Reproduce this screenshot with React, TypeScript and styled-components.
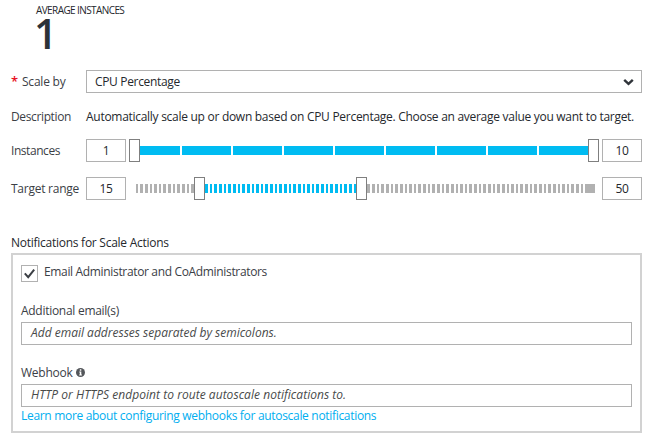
import React from 'react';
import styled, { createGlobalStyle } from 'styled-components';

const GlobalStyle = createGlobalStyle`
  * { box-sizing: border-box; }
  body {
    margin: 0;
    background: #fff;
    color: #25282d;
    font: 12px/17px "Open Sans", "Noto Sans", sans-serif;
  }
`;

const Page = styled.main`
  width: 663px;
  height: 443px;
  padding: 4px 21px 0 11px;
  display: flex;
  flex-direction: column;
  overflow: hidden;
`;

const Summary = styled.header`
  height: 66px;
  padding-left: 25px;
`;

const SummaryTitle = styled.div`
  font-size: 10px;
  font-weight: 500;
  line-height: 13px;
  letter-spacing: -0.59px;
  white-space: nowrap;
`;

const SummaryValue = styled.div`
  margin-left: -2px;
  color: #2c3238;
  font-size: 41px;
  font-weight: 600;
  line-height: 33px;
`;

const Text = styled.span<{ $spacing: number }>`
  letter-spacing: ${(p) => p.$spacing}px;
  white-space: nowrap;
`;

const Row = styled.div<{ $gap: number; $height?: number }>`
  display: grid;
  grid-template-columns: 75px 1fr;
  height: ${(p) => p.$height ?? 23}px;
  line-height: ${(p) => p.$height ?? 23}px;
  margin-bottom: ${(p) => p.$gap}px;
`;

const Label = styled.label<{ $spacing: number }>`
  color: #3b4046;
  letter-spacing: ${(p) => p.$spacing}px;
  white-space: nowrap;
`;

const Required = styled.span`
  display: inline-block;
  width: 11px;
  color: #e81123;
  font-size: 13px;
  font-weight: 600;
  line-height: 17px;
  letter-spacing: 0;
`;

const Select = styled.div`
  display: flex;
  align-items: center;
  justify-content: space-between;
  height: 23px;
  padding: 0 7px 0 8px;
  border: 1px solid #b1b1b1;
  line-height: 21px;
`;

const RangeControl = styled.div`
  display: grid;
  grid-template-columns: 40px 476px 40px;
`;

const NumberBox = styled.div`
  border: 1px solid #b1b1b1;
  line-height: 21px;
  text-align: center;
  letter-spacing: -0.3px;
`;

const Slider = styled.div`
  position: relative;
  padding: 7px 7px 0 10px;
`;

const Track = styled.div`
  display: flex;
  height: 9px;
  overflow: hidden;
`;

const Segment = styled.span<{ $width: number; $on: boolean; $gap?: boolean }>`
  flex: none;
  width: ${(p) => p.$width}px;
  background: ${(p) => (p.$on ? '#00bcf2' : '#b1b1b1')};
  background-clip: content-box;
  padding-right: ${(p) => (p.$gap ? 2 : 0)}px;
`;

const Handle = styled.span<{ $left: number }>`
  position: absolute;
  top: 0;
  left: ${(p) => p.$left}px;
  width: 11px;
  height: 23px;
  border: 1px solid #7f7f7f;
  background: #fff;
`;

const SectionTitle = styled.h2`
  margin: 34px 0 2px;
  font-size: 12px;
  font-weight: 400;
  line-height: 17px;
  letter-spacing: -0.26px;
`;

const Panel = styled.section`
  height: 180px;
  padding: 8px 8px 0;
  border: 2px solid #d2d2d2;
  display: flex;
  flex-direction: column;
`;

const CheckRow = styled.div`
  display: flex;
  gap: 6px;
  height: 39px;
  color: #3b4046;
`;

const CheckBox = styled.span`
  width: 17px;
  height: 17px;
  margin-top: 2px;
  border: 1px solid #b1b1b1;
  display: grid;
  place-items: center;
`;

const FieldLabel = styled.label<{ $spacing: number }>`
  display: flex;
  align-items: center;
  gap: 3px;
  height: 17px;
  margin-bottom: 3px;
  color: #3b4046;
  letter-spacing: ${(p) => p.$spacing}px;
`;

const TextField = styled.div<{ $gap: number; $spacing: number }>`
  height: 23px;
  margin-bottom: ${(p) => p.$gap}px;
  padding-left: 9px;
  border: 1px solid #b1b1b1;
  color: #484a4a;
  font-style: italic;
  line-height: 19px;
  letter-spacing: ${(p) => p.$spacing}px;
`;

const Link = styled.a`
  color: #00aeef;
  letter-spacing: -0.31px;
`;

const PITCH = 51;
const TICK = 51 / 11;

/** Marks at a fractional pitch, snapped to whole pixels; the first starts at `first`. */
const marks = (pitch: number, count: number, first: number, base: number) =>
  Array.from({ length: count }, (_, i) => {
    const start = i === 0 ? first : Math.round(base + i * pitch);
    return { start, width: Math.round(base + (i + 1) * pitch) - start };
  });

const instanceMarks = marks(PITCH, 9, 136, 131);
const targetMarks = marks(TICK, 97, 136, 131 + TICK);

export default function App() {
  return (
    <>
      <GlobalStyle />
      <Page>
        <Summary>
          <SummaryTitle>AVERAGE INSTANCES</SummaryTitle>
          <SummaryValue>1</SummaryValue>
        </Summary>

        <Row $gap={15}>
          <Label $spacing={-0.22}>
            <Required>*</Required>Scale by
          </Label>
          <Select>
            <Text $spacing={-0.33}>CPU Percentage</Text>
            <svg width="11" height="8" viewBox="0 0 11 8">
              <path d="M1.2 1.8 5.5 5.9 9.8 1.8" fill="none" stroke="#30343a" strokeWidth="2.4" />
            </svg>
          </Select>
        </Row>

        <Row $gap={14} $height={17}>
          <Label $spacing={-0.37}>Description</Label>
          <Text $spacing={-0.282}>
            Automatically scale up or down based on CPU Percentage. Choose an average value you want to target.
          </Text>
        </Row>

        <Row $gap={15}>
          <Label $spacing={-0.44}>Instances</Label>
          <RangeControl>
            <NumberBox>1</NumberBox>
            <Slider>
              <Track>
                {instanceMarks.map((m) => (
                  <Segment key={m.start} $width={m.width} $on $gap />
                ))}
              </Track>
              <Handle $left={3} />
              <Handle $left={462} />
            </Slider>
            <NumberBox>10</NumberBox>
          </RangeControl>
        </Row>

        <Row $gap={0}>
          <Label $spacing={-0.25}>Target range</Label>
          <RangeControl>
            <NumberBox>15</NumberBox>
            <Slider>
              <Track>
                {targetMarks.map((m) => (
                  <Segment key={m.start} $width={m.width} $on={m.start > 198 && m.start < 360} $gap />
                ))}
                <Segment $width={10} $on={false} />
              </Track>
              <Handle $left={68} />
              <Handle $left={230} />
            </Slider>
            <NumberBox>50</NumberBox>
          </RangeControl>
        </Row>

        <SectionTitle>Notifications for Scale Actions</SectionTitle>
        <Panel>
          <CheckRow>
            <CheckBox>
              <svg width="13" height="13" viewBox="0 0 13 13">
                <path d="M1.8 6.3 5.2 10.2 11.2 2.6" fill="none" stroke="#3b3f44" strokeWidth="2" />
              </svg>
            </CheckBox>
            <Text $spacing={-0.34}>Email Administrator and CoAdministrators</Text>
          </CheckRow>

          <FieldLabel $spacing={-0.28}>Additional email(s)</FieldLabel>
          <TextField $gap={19} $spacing={0}>
            Add email addresses separated by semicolons.
          </TextField>

          <FieldLabel $spacing={-0.25}>
            Webhook
            <svg width="9" height="9" viewBox="0 0 9 9">
              <circle cx="4.5" cy="4.5" r="4.5" fill="#54575b" />
              <path d="M3.8 1.3h1.5v1.4H3.8zM3.3 3.6h2v2.9h.6v.9H3.2v-.9h.6V4.4h-.5z" fill="#fff" />
            </svg>
          </FieldLabel>
          <TextField $gap={0} $spacing={0.04}>
            HTTP or HTTPS endpoint to route autoscale notifications to.
          </TextField>
          <Link>Learn more about configuring webhooks for autoscale notifications</Link>
        </Panel>
      </Page>
    </>
  );
}
